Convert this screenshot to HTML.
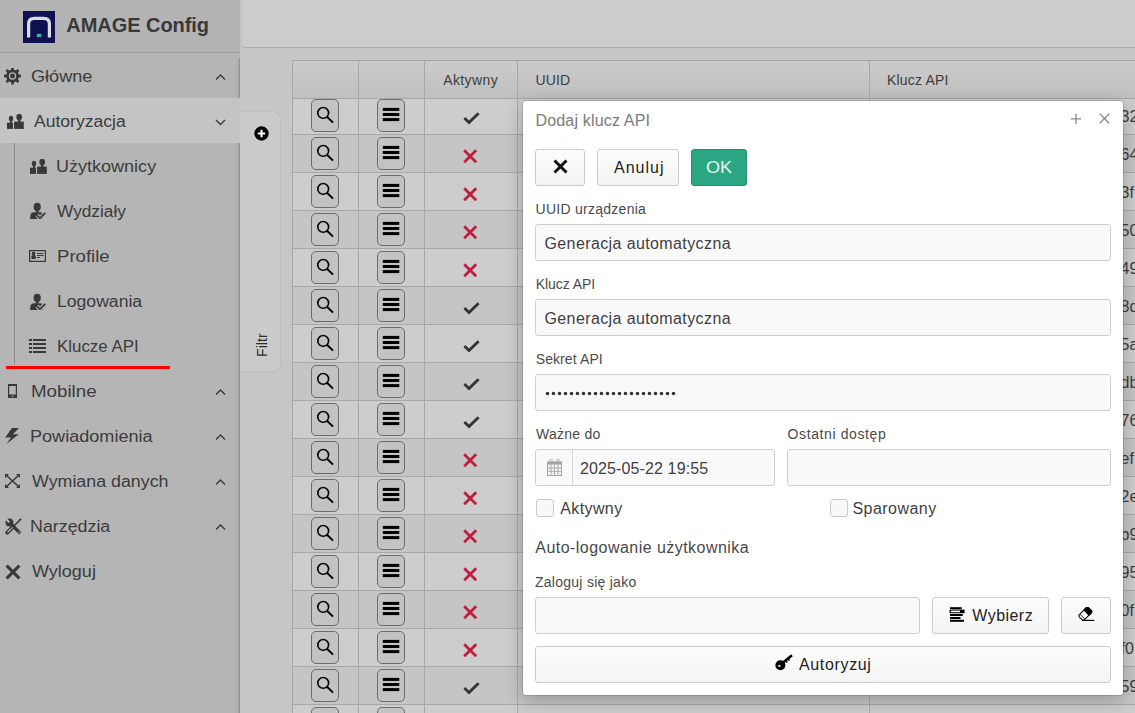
<!DOCTYPE html>
<html><head><meta charset="utf-8">
<style>
*{box-sizing:border-box}
html,body{margin:0;padding:0;width:1135px;height:713px;overflow:hidden;background:#c6c6c6;font-family:"Liberation Sans",sans-serif;position:relative}
.abs{position:absolute}
#side{position:absolute;left:0;top:0;width:240px;height:713px;background:#b5b5b5;z-index:3}
#side .hdr{position:absolute;left:0;top:0;width:240px;height:53px;border-bottom:1px solid #9c9c9c;background:#b4b4b4}
.it{position:absolute;font-size:16px;line-height:18px;color:#3b3b3b;white-space:nowrap}
#topbar{position:absolute;left:241px;top:0;width:894px;height:48px;background:#cdcdcd;border-bottom:1px solid #adadad;border-left:1px solid #c0c0c0;border-bottom-left-radius:4px}
#filter{position:absolute;left:240px;top:111px;width:41px;height:261px;background:#cbcbcb;border:1px solid #bdbdbd;border-left:none;border-radius:0 8px 8px 0;z-index:2}
.row{position:absolute;left:292px;width:843px}
.vl{position:absolute;top:60px;width:1px;height:653px;background:#a7a7a7}
.hl{position:absolute;left:292px;width:843px;height:1px;background:#a7a7a7}
.tb{position:absolute;width:28px;height:33px;border:1.3px solid #6b6b76;border-radius:5px;background:#c3c3c5;line-height:0}
.tb svg{position:absolute;left:-1.3px;top:-1.3px}
.ic{position:absolute}
.th{position:absolute;top:71px;font-size:14px;line-height:16px;color:#3d3d3d;white-space:nowrap}
.rt{position:absolute;left:1120.5px;font-size:16px;line-height:18px;color:#3d3d3d;white-space:nowrap}
#modal{position:absolute;left:522px;top:100px;width:602px;height:596px;background:#fff;border:1px solid rgba(0,0,0,0.12);border-radius:4px;box-shadow:0 5px 18px rgba(0,0,0,0.22);z-index:10;background-clip:padding-box}
.m{position:absolute;white-space:nowrap}
.lbl{position:absolute;font-size:14px;line-height:16px;color:#4a4a4a;white-space:nowrap}
.inp{position:absolute;height:37px;background:#f9f9f9;border:1px solid #cfcfcf;border-radius:3px}
.btn{position:absolute;height:37px;background:linear-gradient(#fdfdfd,#f4f4f4);border:1px solid #cccccc;border-radius:3px}
.cb{position:absolute;width:19px;height:19px;background:#f8f8f8;border:1px solid #c9c9c9;border-radius:3px}
</style></head><body>
<div id="side">
  <div class="hdr"></div>
  <div style="position:absolute;left:235px;top:58px;width:5px;height:655px;background:linear-gradient(90deg,rgba(0,0,0,0),rgba(0,0,0,0.03) 50%,rgba(0,0,0,0.07) 75%,rgba(0,0,0,0.2) 80%,rgba(0,0,0,0.2))"></div>
  <div style="position:absolute;left:0;top:98px;width:240px;height:45px;background:#c4c4c4"></div>
  <div style="position:absolute;left:14px;top:143px;width:1px;height:222px;background:#8f8f8f"></div>
  <svg style="position:absolute;left:23px;top:11px" width="32" height="32" viewBox="0 0 32 32"><rect width="32" height="32" fill="#0f1152"/><path d="M5.6,26.5 L5.6,13 Q5.6,7.3 11.3,7.3 L20.7,7.3 Q26.4,7.3 26.4,13 L26.4,26.5" stroke="#dcdcdc" stroke-width="3.2" fill="none"/><rect x="13.8" y="22.8" width="4.4" height="3.2" fill="#2bbd8f"/></svg>
  <div style="position:absolute;left:66.3px;top:14.3px;font-size:20px;line-height:22px;font-weight:700;color:#383838;white-space:nowrap;letter-spacing:-0.05px">AMAGE Config</div>
  <div class="it" style="left:31.23px;top:68.0px;transform:scaleX(1.1327);transform-origin:0 0">Główne</div>
<div style="position:absolute;left:4px;top:68px;line-height:0"><svg width="18" height="17" viewBox="0 0 18 17"><path d="M14.75,6.60 L17.00,6.68 L17.00,9.32 L14.75,9.40 L13.90,11.43 L15.44,13.08 L13.58,14.94 L11.93,13.40 L9.90,14.25 L9.82,16.50 L7.18,16.50 L7.10,14.25 L5.07,13.40 L3.42,14.94 L1.56,13.08 L3.10,11.43 L2.25,9.40 L0.00,9.32 L0.00,6.68 L2.25,6.60 L3.10,4.57 L1.56,2.92 L3.42,1.06 L5.07,2.60 L7.10,1.75 L7.18,-0.50 L9.82,-0.50 L9.90,1.75 L11.93,2.60 L13.58,1.06 L15.44,2.92 L13.90,4.57Z" fill="#383838"/><circle cx="8.5" cy="8" r="3.7" fill="#b5b5b5"/><circle cx="8.5" cy="8" r="2.4" fill="#383838"/></svg></div>
<svg style="position:absolute;left:214.5px;top:74px" width="11" height="7" viewBox="0 0 11 7"><path d="M1,5.5 L5.5,1 L10,5.5" stroke="#383838" stroke-width="1.4" fill="none"/></svg>
<div class="it" style="left:34.32px;top:113.0px;transform:scaleX(1.0964);transform-origin:0 0">Autoryzacja</div>
<div style="position:absolute;left:7px;top:114px;line-height:0"><svg width="17" height="15" viewBox="0 0 17 15"><ellipse cx="4" cy="4.6" rx="2.2" ry="2.9" fill="#383838"/><rect x="3" y="6" width="2" height="3" fill="#383838"/><rect x="0" y="8.7" width="6" height="6.2" fill="#383838"/><ellipse cx="12.2" cy="3.1" rx="2.9" ry="3.3" fill="#383838"/><rect x="11" y="5" width="2.4" height="3" fill="#383838"/><rect x="7.1" y="7.6" width="9.7" height="7.3" fill="#383838"/></svg></div>
<svg style="position:absolute;left:214.5px;top:118.69999999999999px" width="11" height="7" viewBox="0 0 11 7"><path d="M1,1 L5.5,5.5 L10,1" stroke="#383838" stroke-width="1.4" fill="none"/></svg>
<div class="it" style="left:55.6px;top:158.0px;transform:scaleX(1.1264);transform-origin:0 0">Użytkownicy</div>
<div style="position:absolute;left:29.5px;top:159px;line-height:0"><svg width="17" height="15" viewBox="0 0 17 15"><ellipse cx="4" cy="4.6" rx="2.2" ry="2.9" fill="#383838"/><rect x="3" y="6" width="2" height="3" fill="#383838"/><rect x="0" y="8.7" width="6" height="6.2" fill="#383838"/><ellipse cx="12.2" cy="3.1" rx="2.9" ry="3.3" fill="#383838"/><rect x="11" y="5" width="2.4" height="3" fill="#383838"/><rect x="7.1" y="7.6" width="9.7" height="7.3" fill="#383838"/></svg></div>
<div class="it" style="left:57.0px;top:203.0px;transform:scaleX(1.0781);transform-origin:0 0">Wydziały</div>
<div style="position:absolute;left:30px;top:202px;line-height:0"><svg width="16" height="17" viewBox="0 0 16 17"><ellipse cx="7.2" cy="4.9" rx="3.6" ry="4.1" fill="#383838"/><rect x="5.8" y="8" width="2.8" height="2.5" fill="#383838"/><path d="M0,16.9 L0.6,12.6 Q1.2,10.2 4,10.2 L10.5,10.2 Q12.5,10.2 13,12 L13,16.9Z" fill="#383838"/><path d="M7,13.3 L10,16.2 L15.4,10.8" stroke="#b5b5b5" stroke-width="4" fill="none"/><path d="M7,13.3 L10,16.2 L15.4,10.8" stroke="#383838" stroke-width="1.7" fill="none"/></svg></div>
<div class="it" style="left:56.62px;top:248.0px;transform:scaleX(1.1605);transform-origin:0 0">Profile</div>
<div style="position:absolute;left:29.3px;top:250px;line-height:0"><svg width="17" height="12" viewBox="0 0 17 12"><rect x="0.6" y="0.6" width="15.8" height="10.8" fill="none" stroke="#383838" stroke-width="1.2"/><ellipse cx="4.6" cy="3.3" rx="1.7" ry="1.9" fill="#383838"/><path d="M2.4,8.9 L2.4,6.4 Q2.6,4.7 4.6,4.7 Q6.6,4.7 6.8,6.4 L6.8,8.9Z" fill="#383838"/><rect x="8" y="3" width="6.5" height="1" fill="#383838"/><rect x="8" y="5" width="6.5" height="1" fill="#383838"/><rect x="8" y="7" width="3" height="1" fill="#383838"/></svg></div>
<div class="it" style="left:56.69px;top:293.0px;transform:scaleX(1.1);transform-origin:0 0">Logowania</div>
<div style="position:absolute;left:30px;top:293px;line-height:0"><svg width="16" height="17" viewBox="0 0 16 17"><ellipse cx="7.2" cy="4.9" rx="3.6" ry="4.1" fill="#383838"/><rect x="5.8" y="8" width="2.8" height="2.5" fill="#383838"/><path d="M0,16.9 L0.6,12.6 Q1.2,10.2 4,10.2 L10.5,10.2 Q12.5,10.2 13,12 L13,16.9Z" fill="#383838"/><path d="M7,13.3 L10,16.2 L15.4,10.8" stroke="#b5b5b5" stroke-width="4" fill="none"/><path d="M7,13.3 L10,16.2 L15.4,10.8" stroke="#383838" stroke-width="1.7" fill="none"/></svg></div>
<div class="it" style="left:56.74px;top:338.0px;transform:scaleX(1.0547);transform-origin:0 0">Klucze API</div>
<div style="position:absolute;left:29.3px;top:339px;line-height:0"><svg width="17" height="14" viewBox="0 0 17 14"><rect x="0" y="0" width="3" height="2" fill="#383838"/><rect x="4" y="0" width="13" height="2" fill="#383838"/><rect x="0" y="4" width="3" height="2" fill="#383838"/><rect x="4" y="4" width="13" height="2" fill="#383838"/><rect x="0" y="8" width="3" height="2" fill="#383838"/><rect x="4" y="8" width="13" height="2" fill="#383838"/><rect x="0" y="12" width="3" height="2" fill="#383838"/><rect x="4" y="12" width="13" height="2" fill="#383838"/></svg></div>
<div class="it" style="left:31.4px;top:383.0px;transform:scaleX(1.1704);transform-origin:0 0">Mobilne</div>
<div style="position:absolute;left:8.2px;top:384px;line-height:0"><svg width="9" height="14" viewBox="0 0 9 14"><rect x="0.6" y="0.6" width="7.8" height="12.8" fill="none" stroke="#383838" stroke-width="1.2"/><rect x="0" y="0" width="9" height="2" fill="#383838"/><rect x="0" y="10.5" width="9" height="3.5" fill="#383838"/><rect x="3.5" y="11.7" width="2" height="1" fill="#b5b5b5"/></svg></div>
<svg style="position:absolute;left:214.5px;top:389px" width="11" height="7" viewBox="0 0 11 7"><path d="M1,5.5 L5.5,1 L10,5.5" stroke="#383838" stroke-width="1.4" fill="none"/></svg>
<div class="it" style="left:30.38px;top:428.0px;transform:scaleX(1.1299);transform-origin:0 0">Powiadomienia</div>
<div style="position:absolute;left:4.8px;top:428px;line-height:0"><svg width="15" height="17" viewBox="0 0 15 17"><path d="M7,0 L14,0 L7.8,6.3 L13.8,6.3 L1.4,16 L6,9.6 L0.2,9.6Z" fill="#383838"/></svg></div>
<svg style="position:absolute;left:214.5px;top:434px" width="11" height="7" viewBox="0 0 11 7"><path d="M1,5.5 L5.5,1 L10,5.5" stroke="#383838" stroke-width="1.4" fill="none"/></svg>
<div class="it" style="left:31.52px;top:473.0px;transform:scaleX(1.1132);transform-origin:0 0">Wymiana danych</div>
<div style="position:absolute;left:5px;top:474px;line-height:0"><svg width="15" height="14" viewBox="0 0 15 14"><path d="M1.5,1.5 L13.5,12.5 M13.5,1.5 L1.5,12.5" stroke="#383838" stroke-width="1.6"/><path d="M0,0 L4,0 L0,4Z M15,0 L11,0 L15,4Z M0,14 L4,14 L0,10Z M15,14 L11,14 L15,10Z" fill="#383838"/></svg></div>
<svg style="position:absolute;left:214.5px;top:479px" width="11" height="7" viewBox="0 0 11 7"><path d="M1,5.5 L5.5,1 L10,5.5" stroke="#383838" stroke-width="1.4" fill="none"/></svg>
<div class="it" style="left:30.41px;top:518.0px;transform:scaleX(1.1143);transform-origin:0 0">Narzędzia</div>
<div style="position:absolute;left:4.5px;top:517.5px;line-height:0"><svg width="17" height="17" viewBox="0 0 17 17"><path d="M5,5 L14.3,14.3" stroke="#383838" stroke-width="3.2" stroke-linecap="round"/><circle cx="4.4" cy="4.4" r="3.9" fill="#383838"/><path d="M0.2,1.6 L3.6,5 L5,3.6 L1.6,0.2Z" fill="#b5b5b5"/><circle cx="14.2" cy="14.2" r="0.7" fill="#b5b5b5"/><path d="M16,1 L8.6,8.2" stroke="#383838" stroke-width="1.6"/><path d="M16.3,0.3 L15.2,2.6 L13.9,1.4Z" fill="#383838"/><path d="M7.8,9 L2.3,14.6" stroke="#383838" stroke-width="4" stroke-linecap="round"/><path d="M7.2,9.6 L2.9,14" stroke="#b5b5b5" stroke-width="1.2" stroke-linecap="round"/></svg></div>
<svg style="position:absolute;left:214.5px;top:524px" width="11" height="7" viewBox="0 0 11 7"><path d="M1,5.5 L5.5,1 L10,5.5" stroke="#383838" stroke-width="1.4" fill="none"/></svg>
<div class="it" style="left:31.51px;top:563.0px;transform:scaleX(1.1255);transform-origin:0 0">Wyloguj</div>
<div style="position:absolute;left:5px;top:563.5px;line-height:0"><svg width="16" height="16" viewBox="0 0 16 16"><path d="M1.6,1.6 L14.4,14.4 M14.4,1.6 L1.6,14.4" stroke="#383838" stroke-width="3"/></svg></div>
  <div style="position:absolute;left:5.5px;top:365.5px;width:164px;height:3px;background:#ff0000"></div>
</div>
<div id="topbar"></div>
<div id="filter">
  <svg style="position:absolute;left:14px;top:14px" width="15" height="15" viewBox="0 0 15 15"><circle cx="7.5" cy="7.5" r="7.2" fill="#000"/><path d="M7.5,3.8 L7.5,11.2 M3.8,7.5 L11.2,7.5" stroke="#fff" stroke-width="2.1"/></svg>
  <div style="position:absolute;left:15px;top:245px;transform:rotate(-90deg);transform-origin:0 0;font-size:14px;line-height:15px;letter-spacing:0.1px;color:#2e2e2e;white-space:nowrap">Filtr</div>
</div>
<div class="row" style="top:61px;height:37px;background:linear-gradient(#cbcbcb,#c0c0c0)"></div>
<div class="row" style="top:99px;height:36px;background:#cdcdcd"></div>
<div class="tb" style="left:311px;top:99.0px"><svg width="28" height="33" viewBox="0 0 28 33"><circle cx="12.2" cy="13.9" r="5.4" stroke="#000" stroke-width="1.6" fill="none"/><path d="M16,17.7 L22,23.6" stroke="#000" stroke-width="1.9"/></svg></div>
<div class="tb" style="left:377px;top:99.0px"><svg width="28" height="33" viewBox="0 0 28 33"><rect x="5.8" y="8.9" width="16.5" height="3" fill="#000"/><rect x="5.8" y="14" width="16.5" height="3" fill="#000"/><rect x="5.8" y="19.1" width="16.5" height="3" fill="#000"/></svg></div>
<svg class="ic" style="left:462.5px;top:111.8px" width="17" height="14" viewBox="0 0 17 14"><path d="M1.4,6.1 L6,10.6 L15.6,1.2" stroke="#333" stroke-width="2.8" fill="none"/></svg>
<div class="rt" style="top:108.0px">32</div>
<div class="row" style="top:135px;height:38px;background:#c5c5c5"></div>
<div class="tb" style="left:311px;top:137.0px"><svg width="28" height="33" viewBox="0 0 28 33"><circle cx="12.2" cy="13.9" r="5.4" stroke="#000" stroke-width="1.6" fill="none"/><path d="M16,17.7 L22,23.6" stroke="#000" stroke-width="1.9"/></svg></div>
<div class="tb" style="left:377px;top:137.0px"><svg width="28" height="33" viewBox="0 0 28 33"><rect x="5.8" y="8.9" width="16.5" height="3" fill="#000"/><rect x="5.8" y="14" width="16.5" height="3" fill="#000"/><rect x="5.8" y="19.1" width="16.5" height="3" fill="#000"/></svg></div>
<svg class="ic" style="left:463.3px;top:149.3px" width="15" height="15" viewBox="0 0 15 15"><path d="M1.2,1.2 L13.2,13.2 M13.2,1.2 L1.2,13.2" stroke="#c21d3d" stroke-width="2.8"/></svg>
<div class="rt" style="top:146.0px">64</div>
<div class="row" style="top:173px;height:38px;background:#cdcdcd"></div>
<div class="tb" style="left:311px;top:175.0px"><svg width="28" height="33" viewBox="0 0 28 33"><circle cx="12.2" cy="13.9" r="5.4" stroke="#000" stroke-width="1.6" fill="none"/><path d="M16,17.7 L22,23.6" stroke="#000" stroke-width="1.9"/></svg></div>
<div class="tb" style="left:377px;top:175.0px"><svg width="28" height="33" viewBox="0 0 28 33"><rect x="5.8" y="8.9" width="16.5" height="3" fill="#000"/><rect x="5.8" y="14" width="16.5" height="3" fill="#000"/><rect x="5.8" y="19.1" width="16.5" height="3" fill="#000"/></svg></div>
<svg class="ic" style="left:463.3px;top:187.3px" width="15" height="15" viewBox="0 0 15 15"><path d="M1.2,1.2 L13.2,13.2 M13.2,1.2 L1.2,13.2" stroke="#c21d3d" stroke-width="2.8"/></svg>
<div class="rt" style="top:184.0px">3f</div>
<div class="row" style="top:211px;height:38px;background:#c5c5c5"></div>
<div class="tb" style="left:311px;top:213.0px"><svg width="28" height="33" viewBox="0 0 28 33"><circle cx="12.2" cy="13.9" r="5.4" stroke="#000" stroke-width="1.6" fill="none"/><path d="M16,17.7 L22,23.6" stroke="#000" stroke-width="1.9"/></svg></div>
<div class="tb" style="left:377px;top:213.0px"><svg width="28" height="33" viewBox="0 0 28 33"><rect x="5.8" y="8.9" width="16.5" height="3" fill="#000"/><rect x="5.8" y="14" width="16.5" height="3" fill="#000"/><rect x="5.8" y="19.1" width="16.5" height="3" fill="#000"/></svg></div>
<svg class="ic" style="left:463.3px;top:225.3px" width="15" height="15" viewBox="0 0 15 15"><path d="M1.2,1.2 L13.2,13.2 M13.2,1.2 L1.2,13.2" stroke="#c21d3d" stroke-width="2.8"/></svg>
<div class="rt" style="top:222.0px">50</div>
<div class="row" style="top:249px;height:38px;background:#cdcdcd"></div>
<div class="tb" style="left:311px;top:251.0px"><svg width="28" height="33" viewBox="0 0 28 33"><circle cx="12.2" cy="13.9" r="5.4" stroke="#000" stroke-width="1.6" fill="none"/><path d="M16,17.7 L22,23.6" stroke="#000" stroke-width="1.9"/></svg></div>
<div class="tb" style="left:377px;top:251.0px"><svg width="28" height="33" viewBox="0 0 28 33"><rect x="5.8" y="8.9" width="16.5" height="3" fill="#000"/><rect x="5.8" y="14" width="16.5" height="3" fill="#000"/><rect x="5.8" y="19.1" width="16.5" height="3" fill="#000"/></svg></div>
<svg class="ic" style="left:463.3px;top:263.3px" width="15" height="15" viewBox="0 0 15 15"><path d="M1.2,1.2 L13.2,13.2 M13.2,1.2 L1.2,13.2" stroke="#c21d3d" stroke-width="2.8"/></svg>
<div class="rt" style="top:260.0px">49</div>
<div class="row" style="top:287px;height:38px;background:#c5c5c5"></div>
<div class="tb" style="left:311px;top:289.0px"><svg width="28" height="33" viewBox="0 0 28 33"><circle cx="12.2" cy="13.9" r="5.4" stroke="#000" stroke-width="1.6" fill="none"/><path d="M16,17.7 L22,23.6" stroke="#000" stroke-width="1.9"/></svg></div>
<div class="tb" style="left:377px;top:289.0px"><svg width="28" height="33" viewBox="0 0 28 33"><rect x="5.8" y="8.9" width="16.5" height="3" fill="#000"/><rect x="5.8" y="14" width="16.5" height="3" fill="#000"/><rect x="5.8" y="19.1" width="16.5" height="3" fill="#000"/></svg></div>
<svg class="ic" style="left:462.5px;top:301.8px" width="17" height="14" viewBox="0 0 17 14"><path d="M1.4,6.1 L6,10.6 L15.6,1.2" stroke="#333" stroke-width="2.8" fill="none"/></svg>
<div class="rt" style="top:298.0px">8d</div>
<div class="row" style="top:325px;height:38px;background:#cdcdcd"></div>
<div class="tb" style="left:311px;top:327.0px"><svg width="28" height="33" viewBox="0 0 28 33"><circle cx="12.2" cy="13.9" r="5.4" stroke="#000" stroke-width="1.6" fill="none"/><path d="M16,17.7 L22,23.6" stroke="#000" stroke-width="1.9"/></svg></div>
<div class="tb" style="left:377px;top:327.0px"><svg width="28" height="33" viewBox="0 0 28 33"><rect x="5.8" y="8.9" width="16.5" height="3" fill="#000"/><rect x="5.8" y="14" width="16.5" height="3" fill="#000"/><rect x="5.8" y="19.1" width="16.5" height="3" fill="#000"/></svg></div>
<svg class="ic" style="left:462.5px;top:339.8px" width="17" height="14" viewBox="0 0 17 14"><path d="M1.4,6.1 L6,10.6 L15.6,1.2" stroke="#333" stroke-width="2.8" fill="none"/></svg>
<div class="rt" style="top:336.0px">5a</div>
<div class="row" style="top:363px;height:38px;background:#c5c5c5"></div>
<div class="tb" style="left:311px;top:365.0px"><svg width="28" height="33" viewBox="0 0 28 33"><circle cx="12.2" cy="13.9" r="5.4" stroke="#000" stroke-width="1.6" fill="none"/><path d="M16,17.7 L22,23.6" stroke="#000" stroke-width="1.9"/></svg></div>
<div class="tb" style="left:377px;top:365.0px"><svg width="28" height="33" viewBox="0 0 28 33"><rect x="5.8" y="8.9" width="16.5" height="3" fill="#000"/><rect x="5.8" y="14" width="16.5" height="3" fill="#000"/><rect x="5.8" y="19.1" width="16.5" height="3" fill="#000"/></svg></div>
<svg class="ic" style="left:462.5px;top:377.8px" width="17" height="14" viewBox="0 0 17 14"><path d="M1.4,6.1 L6,10.6 L15.6,1.2" stroke="#333" stroke-width="2.8" fill="none"/></svg>
<div class="rt" style="top:374.0px">db</div>
<div class="row" style="top:401px;height:38px;background:#cdcdcd"></div>
<div class="tb" style="left:311px;top:403.0px"><svg width="28" height="33" viewBox="0 0 28 33"><circle cx="12.2" cy="13.9" r="5.4" stroke="#000" stroke-width="1.6" fill="none"/><path d="M16,17.7 L22,23.6" stroke="#000" stroke-width="1.9"/></svg></div>
<div class="tb" style="left:377px;top:403.0px"><svg width="28" height="33" viewBox="0 0 28 33"><rect x="5.8" y="8.9" width="16.5" height="3" fill="#000"/><rect x="5.8" y="14" width="16.5" height="3" fill="#000"/><rect x="5.8" y="19.1" width="16.5" height="3" fill="#000"/></svg></div>
<svg class="ic" style="left:462.5px;top:415.8px" width="17" height="14" viewBox="0 0 17 14"><path d="M1.4,6.1 L6,10.6 L15.6,1.2" stroke="#333" stroke-width="2.8" fill="none"/></svg>
<div class="rt" style="top:412.0px">76</div>
<div class="row" style="top:439px;height:38px;background:#c5c5c5"></div>
<div class="tb" style="left:311px;top:441.0px"><svg width="28" height="33" viewBox="0 0 28 33"><circle cx="12.2" cy="13.9" r="5.4" stroke="#000" stroke-width="1.6" fill="none"/><path d="M16,17.7 L22,23.6" stroke="#000" stroke-width="1.9"/></svg></div>
<div class="tb" style="left:377px;top:441.0px"><svg width="28" height="33" viewBox="0 0 28 33"><rect x="5.8" y="8.9" width="16.5" height="3" fill="#000"/><rect x="5.8" y="14" width="16.5" height="3" fill="#000"/><rect x="5.8" y="19.1" width="16.5" height="3" fill="#000"/></svg></div>
<svg class="ic" style="left:463.3px;top:453.3px" width="15" height="15" viewBox="0 0 15 15"><path d="M1.2,1.2 L13.2,13.2 M13.2,1.2 L1.2,13.2" stroke="#c21d3d" stroke-width="2.8"/></svg>
<div class="rt" style="top:450.0px">ef</div>
<div class="row" style="top:477px;height:38px;background:#cdcdcd"></div>
<div class="tb" style="left:311px;top:479.0px"><svg width="28" height="33" viewBox="0 0 28 33"><circle cx="12.2" cy="13.9" r="5.4" stroke="#000" stroke-width="1.6" fill="none"/><path d="M16,17.7 L22,23.6" stroke="#000" stroke-width="1.9"/></svg></div>
<div class="tb" style="left:377px;top:479.0px"><svg width="28" height="33" viewBox="0 0 28 33"><rect x="5.8" y="8.9" width="16.5" height="3" fill="#000"/><rect x="5.8" y="14" width="16.5" height="3" fill="#000"/><rect x="5.8" y="19.1" width="16.5" height="3" fill="#000"/></svg></div>
<svg class="ic" style="left:463.3px;top:491.3px" width="15" height="15" viewBox="0 0 15 15"><path d="M1.2,1.2 L13.2,13.2 M13.2,1.2 L1.2,13.2" stroke="#c21d3d" stroke-width="2.8"/></svg>
<div class="rt" style="top:488.0px">2e</div>
<div class="row" style="top:515px;height:38px;background:#c5c5c5"></div>
<div class="tb" style="left:311px;top:517.0px"><svg width="28" height="33" viewBox="0 0 28 33"><circle cx="12.2" cy="13.9" r="5.4" stroke="#000" stroke-width="1.6" fill="none"/><path d="M16,17.7 L22,23.6" stroke="#000" stroke-width="1.9"/></svg></div>
<div class="tb" style="left:377px;top:517.0px"><svg width="28" height="33" viewBox="0 0 28 33"><rect x="5.8" y="8.9" width="16.5" height="3" fill="#000"/><rect x="5.8" y="14" width="16.5" height="3" fill="#000"/><rect x="5.8" y="19.1" width="16.5" height="3" fill="#000"/></svg></div>
<svg class="ic" style="left:463.3px;top:529.3px" width="15" height="15" viewBox="0 0 15 15"><path d="M1.2,1.2 L13.2,13.2 M13.2,1.2 L1.2,13.2" stroke="#c21d3d" stroke-width="2.8"/></svg>
<div class="rt" style="top:526.0px">b9</div>
<div class="row" style="top:553px;height:38px;background:#cdcdcd"></div>
<div class="tb" style="left:311px;top:555.0px"><svg width="28" height="33" viewBox="0 0 28 33"><circle cx="12.2" cy="13.9" r="5.4" stroke="#000" stroke-width="1.6" fill="none"/><path d="M16,17.7 L22,23.6" stroke="#000" stroke-width="1.9"/></svg></div>
<div class="tb" style="left:377px;top:555.0px"><svg width="28" height="33" viewBox="0 0 28 33"><rect x="5.8" y="8.9" width="16.5" height="3" fill="#000"/><rect x="5.8" y="14" width="16.5" height="3" fill="#000"/><rect x="5.8" y="19.1" width="16.5" height="3" fill="#000"/></svg></div>
<svg class="ic" style="left:463.3px;top:567.3px" width="15" height="15" viewBox="0 0 15 15"><path d="M1.2,1.2 L13.2,13.2 M13.2,1.2 L1.2,13.2" stroke="#c21d3d" stroke-width="2.8"/></svg>
<div class="rt" style="top:564.0px">95</div>
<div class="row" style="top:591px;height:38px;background:#c5c5c5"></div>
<div class="tb" style="left:311px;top:593.0px"><svg width="28" height="33" viewBox="0 0 28 33"><circle cx="12.2" cy="13.9" r="5.4" stroke="#000" stroke-width="1.6" fill="none"/><path d="M16,17.7 L22,23.6" stroke="#000" stroke-width="1.9"/></svg></div>
<div class="tb" style="left:377px;top:593.0px"><svg width="28" height="33" viewBox="0 0 28 33"><rect x="5.8" y="8.9" width="16.5" height="3" fill="#000"/><rect x="5.8" y="14" width="16.5" height="3" fill="#000"/><rect x="5.8" y="19.1" width="16.5" height="3" fill="#000"/></svg></div>
<svg class="ic" style="left:463.3px;top:605.3px" width="15" height="15" viewBox="0 0 15 15"><path d="M1.2,1.2 L13.2,13.2 M13.2,1.2 L1.2,13.2" stroke="#c21d3d" stroke-width="2.8"/></svg>
<div class="rt" style="top:602.0px">0f</div>
<div class="row" style="top:629px;height:38px;background:#cdcdcd"></div>
<div class="tb" style="left:311px;top:631.0px"><svg width="28" height="33" viewBox="0 0 28 33"><circle cx="12.2" cy="13.9" r="5.4" stroke="#000" stroke-width="1.6" fill="none"/><path d="M16,17.7 L22,23.6" stroke="#000" stroke-width="1.9"/></svg></div>
<div class="tb" style="left:377px;top:631.0px"><svg width="28" height="33" viewBox="0 0 28 33"><rect x="5.8" y="8.9" width="16.5" height="3" fill="#000"/><rect x="5.8" y="14" width="16.5" height="3" fill="#000"/><rect x="5.8" y="19.1" width="16.5" height="3" fill="#000"/></svg></div>
<svg class="ic" style="left:463.3px;top:643.3px" width="15" height="15" viewBox="0 0 15 15"><path d="M1.2,1.2 L13.2,13.2 M13.2,1.2 L1.2,13.2" stroke="#c21d3d" stroke-width="2.8"/></svg>
<div class="rt" style="top:640.0px">f0</div>
<div class="row" style="top:667px;height:38px;background:#c5c5c5"></div>
<div class="tb" style="left:311px;top:669.0px"><svg width="28" height="33" viewBox="0 0 28 33"><circle cx="12.2" cy="13.9" r="5.4" stroke="#000" stroke-width="1.6" fill="none"/><path d="M16,17.7 L22,23.6" stroke="#000" stroke-width="1.9"/></svg></div>
<div class="tb" style="left:377px;top:669.0px"><svg width="28" height="33" viewBox="0 0 28 33"><rect x="5.8" y="8.9" width="16.5" height="3" fill="#000"/><rect x="5.8" y="14" width="16.5" height="3" fill="#000"/><rect x="5.8" y="19.1" width="16.5" height="3" fill="#000"/></svg></div>
<svg class="ic" style="left:462.5px;top:681.8px" width="17" height="14" viewBox="0 0 17 14"><path d="M1.4,6.1 L6,10.6 L15.6,1.2" stroke="#333" stroke-width="2.8" fill="none"/></svg>
<div class="rt" style="top:678.0px">59</div>
<div class="row" style="top:705px;height:38px;background:#cdcdcd"></div>
<div class="tb" style="left:311px;top:707.0px"><svg width="28" height="33" viewBox="0 0 28 33"><circle cx="12.2" cy="13.9" r="5.4" stroke="#000" stroke-width="1.6" fill="none"/><path d="M16,17.7 L22,23.6" stroke="#000" stroke-width="1.9"/></svg></div>
<div class="tb" style="left:377px;top:707.0px"><svg width="28" height="33" viewBox="0 0 28 33"><rect x="5.8" y="8.9" width="16.5" height="3" fill="#000"/><rect x="5.8" y="14" width="16.5" height="3" fill="#000"/><rect x="5.8" y="19.1" width="16.5" height="3" fill="#000"/></svg></div>
<svg class="ic" style="left:462.5px;top:719.8px" width="17" height="14" viewBox="0 0 17 14"><path d="M1.4,6.1 L6,10.6 L15.6,1.2" stroke="#333" stroke-width="2.8" fill="none"/></svg>
<div class="vl" style="left:292px"></div><div class="vl" style="left:358px"></div><div class="vl" style="left:424px"></div><div class="vl" style="left:517px"></div><div class="vl" style="left:869px"></div>
<div class="hl" style="top:60px"></div><div class="hl" style="top:98px"></div><div class="hl" style="top:134px"></div><div class="hl" style="top:172px"></div><div class="hl" style="top:210px"></div><div class="hl" style="top:248px"></div><div class="hl" style="top:286px"></div><div class="hl" style="top:324px"></div><div class="hl" style="top:362px"></div><div class="hl" style="top:400px"></div><div class="hl" style="top:438px"></div><div class="hl" style="top:476px"></div><div class="hl" style="top:514px"></div><div class="hl" style="top:552px"></div><div class="hl" style="top:590px"></div><div class="hl" style="top:628px"></div><div class="hl" style="top:666px"></div><div class="hl" style="top:704px"></div>
<div class="th" style="left:443.2px;top:72px;letter-spacing:0.4px">Aktywny</div>
<div class="th" style="left:535.4px;top:72px;letter-spacing:0.2px">UUID</div>
<div class="th" style="left:887px;top:72px;letter-spacing:0.19px">Klucz API</div>

<div id="modal"><div style="position:absolute;left:0;top:1px;width:600px;height:593px">
 <div class="m" style="left:12.5px;top:10px;font-size:16px;line-height:18px;color:#7b7b7b;letter-spacing:0.17px">Dodaj klucz API</div>
 <svg class="m" style="left:547px;top:11px" width="12" height="12" viewBox="0 0 12 12"><path d="M6,0.7 L6,11 M0.8,5.9 L11,5.9" stroke="#8a8a8a" stroke-width="1.3"/></svg>
 <svg class="m" style="left:576px;top:11px" width="11" height="11" viewBox="0 0 11 11"><path d="M0.8,0.8 L10.2,10.2 M10.2,0.8 L0.8,10.2" stroke="#8a8a8a" stroke-width="1.3"/></svg>
 <div class="btn" style="left:12px;top:47px;width:50px;height:37px"><svg style="position:absolute;left:17px;top:9px" width="15" height="15" viewBox="0 0 15 15"><path d="M1.5,1.5 L13.5,13.5 M13.5,1.5 L1.5,13.5" stroke="#111" stroke-width="3"/></svg></div>
 <div class="btn" style="left:74px;top:47px;width:82px;height:37px"><div class="m" style="left:16px;top:8.5px;font-size:16px;line-height:18px;color:#222;letter-spacing:1.0px">Anuluj</div></div>
 <div class="btn" style="left:168px;top:47px;width:56px;height:37px;background:#2aa684;border-color:#23916f"><div class="m" style="left:14.3px;top:8.5px;font-size:16px;line-height:18px;color:#e9f6f0;transform:scaleX(1.13);transform-origin:0 0">OK</div></div>
 <div class="lbl" style="left:12.6px;top:99px;letter-spacing:0.26px">UUID urządzenia</div>
 <div class="inp" style="left:12px;top:122px;width:576px"><div class="m" style="left:8.5px;top:10px;font-size:16px;line-height:18px;color:#3f3f3f;letter-spacing:0.39px">Generacja automatyczna</div></div>
 <div class="lbl" style="left:12.7px;top:174px;letter-spacing:-0.05px">Klucz API</div>
 <div class="inp" style="left:12px;top:197px;width:576px"><div class="m" style="left:8.5px;top:10px;font-size:16px;line-height:18px;color:#3f3f3f;letter-spacing:0.39px">Generacja automatyczna</div></div>
 <div class="lbl" style="left:12.7px;top:249px;letter-spacing:0.1px">Sekret API</div>
 <div class="inp" style="left:12px;top:272px;width:576px"><svg class="m" style="left:2px;top:10px" width="160" height="17" viewBox="0 0 160 17"><circle cx="9.5" cy="8.5" r="1.75" fill="#333"/><circle cx="15.5" cy="8.5" r="1.75" fill="#333"/><circle cx="21.5" cy="8.5" r="1.75" fill="#333"/><circle cx="27.5" cy="8.5" r="1.75" fill="#333"/><circle cx="33.5" cy="8.5" r="1.75" fill="#333"/><circle cx="39.5" cy="8.5" r="1.75" fill="#333"/><circle cx="45.5" cy="8.5" r="1.75" fill="#333"/><circle cx="51.5" cy="8.5" r="1.75" fill="#333"/><circle cx="57.5" cy="8.5" r="1.75" fill="#333"/><circle cx="63.5" cy="8.5" r="1.75" fill="#333"/><circle cx="69.5" cy="8.5" r="1.75" fill="#333"/><circle cx="75.5" cy="8.5" r="1.75" fill="#333"/><circle cx="81.5" cy="8.5" r="1.75" fill="#333"/><circle cx="87.5" cy="8.5" r="1.75" fill="#333"/><circle cx="93.5" cy="8.5" r="1.75" fill="#333"/><circle cx="99.5" cy="8.5" r="1.75" fill="#333"/><circle cx="105.5" cy="8.5" r="1.75" fill="#333"/><circle cx="111.5" cy="8.5" r="1.75" fill="#333"/><circle cx="117.5" cy="8.5" r="1.75" fill="#333"/><circle cx="123.5" cy="8.5" r="1.75" fill="#333"/><circle cx="129.5" cy="8.5" r="1.75" fill="#333"/><circle cx="135.5" cy="8.5" r="1.75" fill="#333"/></svg></div>
 <div class="lbl" style="left:13.1px;top:324px;letter-spacing:0.25px">Ważne do</div>
 <div class="inp" style="left:12px;top:347px;width:240px"><div style="position:absolute;left:36px;top:0;width:1px;height:35px;background:#d6d6d6"></div>
   <svg style="position:absolute;left:11px;top:9px" width="15" height="17" viewBox="0 0 15 17"><rect x="0.5" y="3" width="14" height="13.5" fill="#f4f4f4" stroke="#a5a5a5" stroke-width="1"/><rect x="0" y="2.8" width="15" height="2.8" fill="#a5a5a5"/><path d="M0.5,9 L14.5,9 M0.5,12.3 L14.5,12.3 M4,5.5 L4,16.5 M7.5,5.5 L7.5,16.5 M11,5.5 L11,16.5" stroke="#a5a5a5" stroke-width="0.9"/><rect x="2.8" y="0" width="2.4" height="4" rx="1.2" fill="none" stroke="#a5a5a5" stroke-width="0.9"/><rect x="9.8" y="0" width="2.4" height="4" rx="1.2" fill="none" stroke="#a5a5a5" stroke-width="0.9"/></svg>
   <div class="m" style="left:44px;top:10px;font-size:16px;line-height:18px;color:#3f3f3f;letter-spacing:0.12px">2025-05-22 19:55</div></div>
 <div class="lbl" style="left:264.6px;top:324px;letter-spacing:0.6px">Ostatni dostęp</div>
 <div class="inp" style="left:264px;top:347px;width:324px"></div>
 <div class="cb" style="left:12.5px;top:396.5px;width:18.5px;height:18.5px"></div>
 <div class="m" style="left:37.3px;top:398px;font-size:16px;line-height:18px;color:#3f3f3f;letter-spacing:0.38px">Aktywny</div>
 <div class="cb" style="left:306.5px;top:396.5px;width:18.5px;height:18.5px"></div>
 <div class="m" style="left:329.5px;top:398px;font-size:16px;line-height:18px;color:#3f3f3f;letter-spacing:0.45px">Sparowany</div>
 <div class="m" style="left:12.3px;top:437.2px;font-size:16px;line-height:18px;color:#484848;letter-spacing:0.46px">Auto-logowanie użytkownika</div>
 <div class="lbl" style="left:12px;top:472px;letter-spacing:0.26px">Zaloguj się jako</div>
 <div class="inp" style="left:12px;top:495px;width:385px"></div>
 <div class="btn" style="left:409px;top:495px;width:117px"><svg style="position:absolute;left:16px;top:8px" width="17" height="17" viewBox="0 0 17 17"><rect x="1" y="1.2" width="11.7" height="2" fill="#000"/><rect x="0.6" y="3.6" width="15" height="3.6" fill="#000"/><rect x="2" y="4.6" width="9" height="1.6" fill="#fff"/><rect x="1" y="8" width="12.7" height="2" fill="#000"/><rect x="1" y="11" width="10.5" height="2" fill="#000"/><rect x="1" y="13.8" width="14" height="2" fill="#000"/></svg><div class="m" style="left:39.3px;top:9px;font-size:16px;line-height:18px;color:#222;letter-spacing:0.45px">Wybierz</div></div>
 <div class="btn" style="left:538px;top:495px;width:50px"><svg style="position:absolute;left:16px;top:9px" width="18" height="16" viewBox="0 0 18 16"><g transform="rotate(-45 7.3 6.8)"><rect x="0.8" y="3.2" width="13" height="7.2" rx="1.8" fill="none" stroke="#000" stroke-width="1"/><path d="M8.4,2.7 L12,2.7 Q14.3,2.7 14.3,5 L14.3,8.6 Q14.3,10.9 12,10.9 L8.4,10.9Z" fill="#000"/><path d="M3.3,3.7 L3.3,9.9" stroke="#000" stroke-width="0.8"/></g><path d="M4,13.4 L16.2,13.4" stroke="#000" stroke-width="1.2"/></svg></div>
 <div class="btn" style="left:12px;top:544px;width:576px;height:37px"><svg style="position:absolute;left:238.5px;top:7px" width="18" height="18" viewBox="0 0 18 18"><circle cx="5.4" cy="11.2" r="5" fill="#000"/><circle cx="4.4" cy="11.9" r="1.15" fill="#fff"/><path d="M7.8,8.7 L17,1.2" stroke="#000" stroke-width="2.5"/><path d="M10.3,7.6 L11.6,9 L12.8,7.9 L11.6,6.4Z M12.6,5.6 L13.9,7 L15,6 L13.8,4.6Z" fill="#000"/></svg><div class="m" style="left:263px;top:9px;font-size:16px;line-height:18px;color:#222;letter-spacing:0.65px">Autoryzuj</div></div>
</div></div>
</body></html>
